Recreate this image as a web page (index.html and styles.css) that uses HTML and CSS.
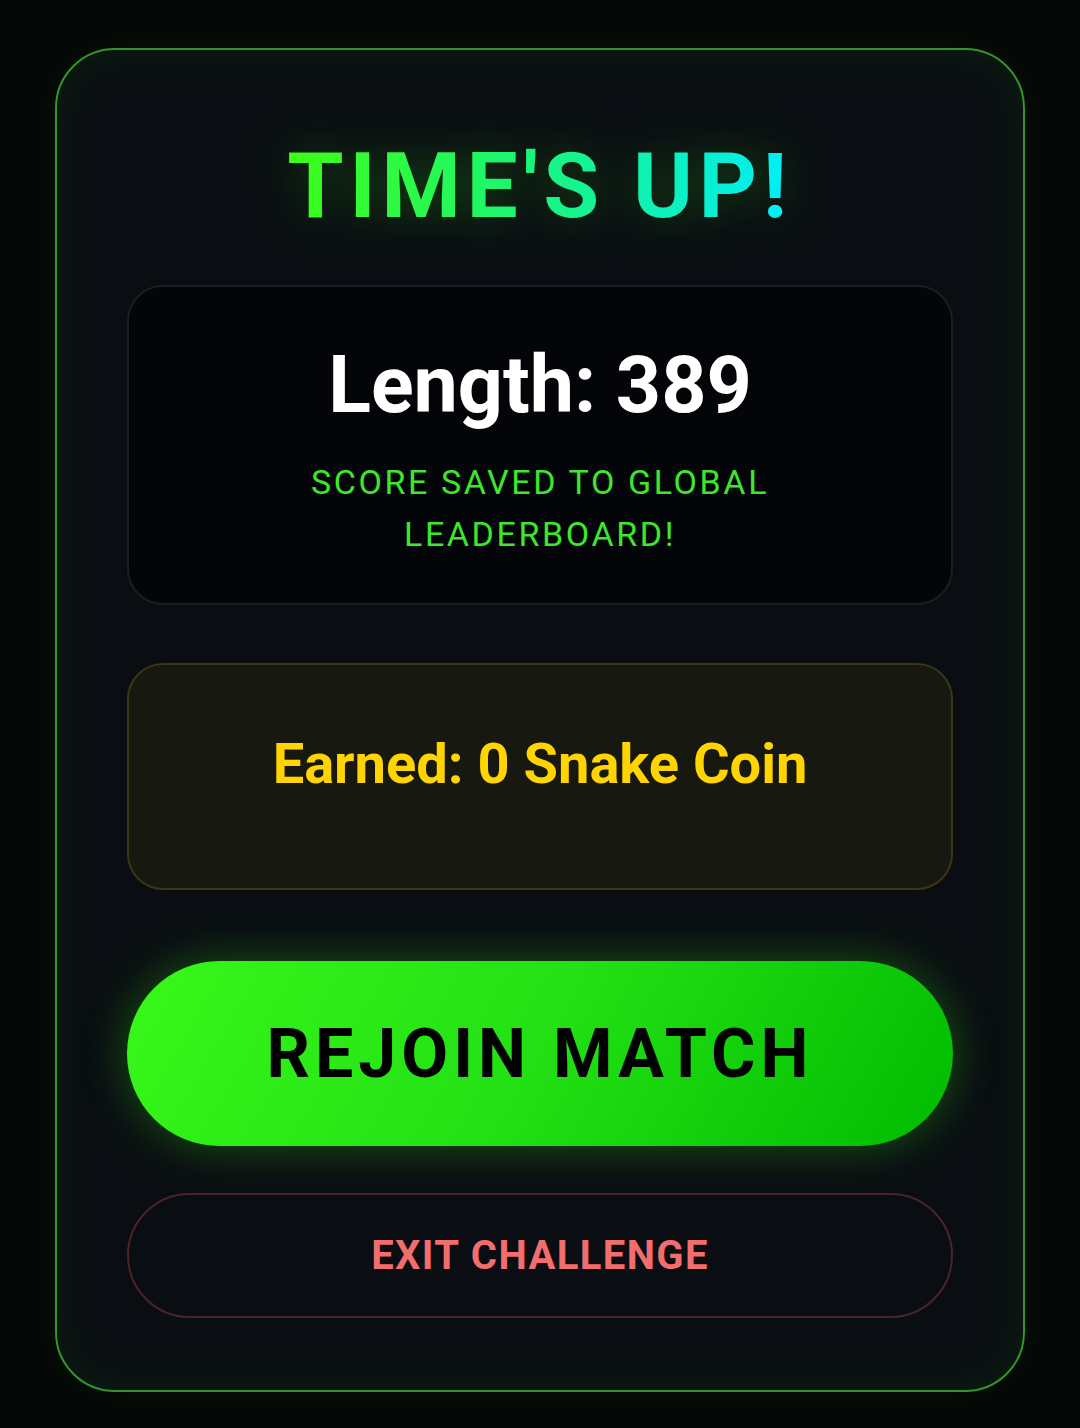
FILE: index.html
```html
<!DOCTYPE html>
<html>
<head>
<meta charset="utf-8">
<link rel="stylesheet" href="styles.css">
</head>
<body>
<div class="card">
  <h1 class="title">TIME'S UP!</h1>
  <div class="stats">
    <div class="length">Length: 389</div>
    <div class="saved">SCORE SAVED TO GLOBAL<br>LEADERBOARD!</div>
  </div>
  <div class="coins">
    <div class="earned">Earned: 0 Snake Coin</div>
  </div>
  <button class="rejoin">REJOIN MATCH</button>
  <button class="exit">EXIT CHALLENGE</button>
</div>
</body>
</html>
```
FILE: styles.css
```css
html, body {
  margin: 0;
  padding: 0;
  background: #060707;
  width: 1080px;
  height: 1428px;
  overflow: hidden;
  font-family: Roboto, "Liberation Sans", sans-serif;
}
.card {
  box-sizing: border-box;
  margin: 48px 55px 0 55px;
  width: 970px;
  height: 1344px;
  border: 2px solid #34962a;
  border-radius: 60px;
  background: #0a0e12;
  box-shadow: inset 0 0 45px rgba(57, 255, 20, 0.07), 0 0 40px rgba(57, 255, 20, 0.05);
  padding: 90px 70px 0 70px;
  display: flex;
  flex-direction: column;
  align-items: stretch;
}
.title {
  margin: 0 auto;
  width: fit-content;
  text-align: center;
  font-size: 91px;
  line-height: 93px;
  font-weight: 700;
  letter-spacing: 5.5px;
  background: linear-gradient(90deg, #3dff16 0%, #1cf572 45%, #00eefc 100%);
  -webkit-background-clip: text;
  background-clip: text;
  color: transparent;
  filter: drop-shadow(0 0 22px rgba(57, 255, 20, 0.25));
}
.stats {
  margin-top: 52px;
  height: 320px;
  box-sizing: border-box;
  border: 2px solid #1b1f23;
  border-radius: 36px;
  background: #030508;
  padding-top: 58px;
  display: flex;
  flex-direction: column;
  align-items: center;
}
.length {
  color: #ffffff;
  font-size: 79px;
  line-height: 80px;
  font-weight: 700;
}
.saved {
  margin-top: 31px;
  color: #3ee62c;
  font-size: 34px;
  line-height: 52px;
  letter-spacing: 2.6px;
  text-align: center;
}
.coins {
  margin-top: 58px;
  height: 227px;
  box-sizing: border-box;
  border: 2px solid #3a3714;
  border-radius: 36px;
  background: #17180f;
  padding-top: 70px;
  display: flex;
  justify-content: center;
}
.earned {
  color: #ffd400;
  font-size: 56px;
  line-height: 58px;
  font-weight: 700;
}
.rejoin {
  margin-top: 71px;
  height: 185px;
  border: none;
  border-radius: 93px;
  background: linear-gradient(120deg, #38f81a 0%, #22e014 50%, #00bb00 100%);
  box-shadow: 0 0 45px rgba(57, 255, 20, 0.3);
  color: #000;
  font-family: Roboto, "Liberation Sans", sans-serif;
  font-size: 68px;
  font-weight: 700;
  letter-spacing: 5px;
  padding: 0;
}
.exit {
  margin-top: 47px;
  height: 125px;
  box-sizing: border-box;
  border: 2px solid #4b2428;
  border-radius: 63px;
  background: transparent;
  color: #f26d6d;
  font-family: Roboto, "Liberation Sans", sans-serif;
  font-size: 40px;
  font-weight: 700;
  letter-spacing: 1.4px;
  padding: 0;
}
```
